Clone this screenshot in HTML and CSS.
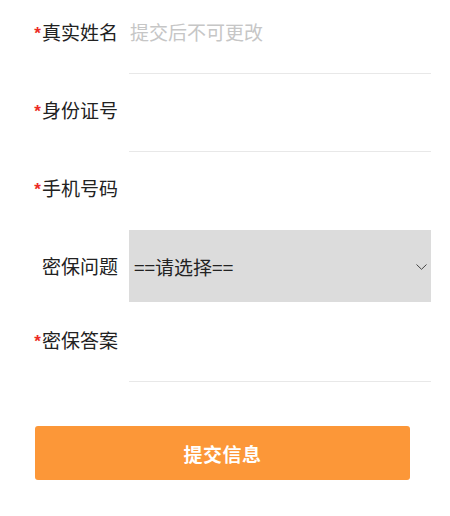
FILE: index.html
```html
<!DOCTYPE html>
<html lang="zh-CN">
<head>
<meta charset="utf-8">
<title>信息填写</title>
<link rel="stylesheet" href="styles.css">
</head>
<body>
<form class="form">
  <div class="row">
    <label class="label"><span class="req">*</span>真实姓名</label>
    <div class="field"><input class="input" type="text" placeholder="提交后不可更改"></div>
  </div>
  <div class="row">
    <label class="label"><span class="req">*</span>身份证号</label>
    <div class="field"><input class="input" type="text"></div>
  </div>
  <div class="row">
    <label class="label"><span class="req">*</span>手机号码</label>
    <div class="field field-plain"><input class="input" type="text"></div>
  </div>
  <div class="row row-select">
    <label class="label">密保问题</label>
    <div class="select-wrap">
      <select class="select">
        <option>==请选择==</option>
      </select>
      <svg class="chevron" width="11" height="6" viewBox="0 0 11 6"><path d="M0.5 0.5 L5.5 5.3 L10.5 0.5" fill="none" stroke="#444" stroke-width="1"/></svg>
    </div>
  </div>
  <div class="row">
    <label class="label"><span class="req">*</span>密保答案</label>
    <div class="field"><input class="input" type="text"></div>
  </div>
  <button class="submit" type="button">提交信息</button>
</form>
</body>
</html>
```

FILE: styles.css
```css
html, body {
  margin: 0;
  padding: 0;
  background: #ffffff;
}

body {
  font-family: "Noto Sans CJK SC", "Noto Sans", sans-serif;
  color: #222222;
}

.form {
  padding: 12px 19px 0 0;
}

.row {
  display: flex;
  align-items: flex-start;
}

.label {
  flex: none;
  width: 118px;
  text-align: right;
  font-size: 19px;
  line-height: 40px;
  color: #222222;
  white-space: nowrap;
}

.req {
  color: #ec2b26;
  font-family: "Liberation Sans", sans-serif;
  font-weight: bold;
  font-size: 17px;
  margin-right: 1px;
  position: relative;
  top: -1px;
}

.field {
  flex: 1;
  margin-left: 11px;
  height: 61px;
  border-bottom: 1px solid #e8e8e8;
  margin-bottom: 16px;
}

.field-plain {
  height: 62px;
  border-bottom: none;
  margin-bottom: 0;
}

.input {
  display: block;
  width: 100%;
  box-sizing: border-box;
  height: 40px;
  border: none;
  outline: none;
  padding: 0 0 0 1px;
  margin: 0;
  background: transparent;
  font-family: inherit;
  font-size: 19px;
  line-height: 40px;
  color: #222222;
}

.input::placeholder {
  color: #c6c6c6;
}

.row-select {
  align-items: center;
  height: 72px;
  margin-bottom: 18px;
}

.select-wrap {
  flex: 1;
  margin-left: 11px;
  height: 72px;
  position: relative;
}

.select {
  display: block;
  width: 100%;
  height: 72px;
  -webkit-appearance: none;
  appearance: none;
  border: none;
  border-radius: 0;
  outline: none;
  background: #dcdcdc;
  padding: 0 0 0 5px;
  margin: 0;
  font-family: inherit;
  font-size: 19px;
  color: #222222;
}

.chevron {
  position: absolute;
  right: 4px;
  top: 34px;
}

.submit {
  display: block;
  margin: 28px 0 0 35px;
  width: 375px;
  height: 54px;
  border: none;
  border-radius: 3px;
  background: #fc9738;
  color: #ffffff;
  font-family: inherit;
  font-size: 19px;
  font-weight: bold;
  letter-spacing: 0.5px;
  cursor: pointer;
}
```
